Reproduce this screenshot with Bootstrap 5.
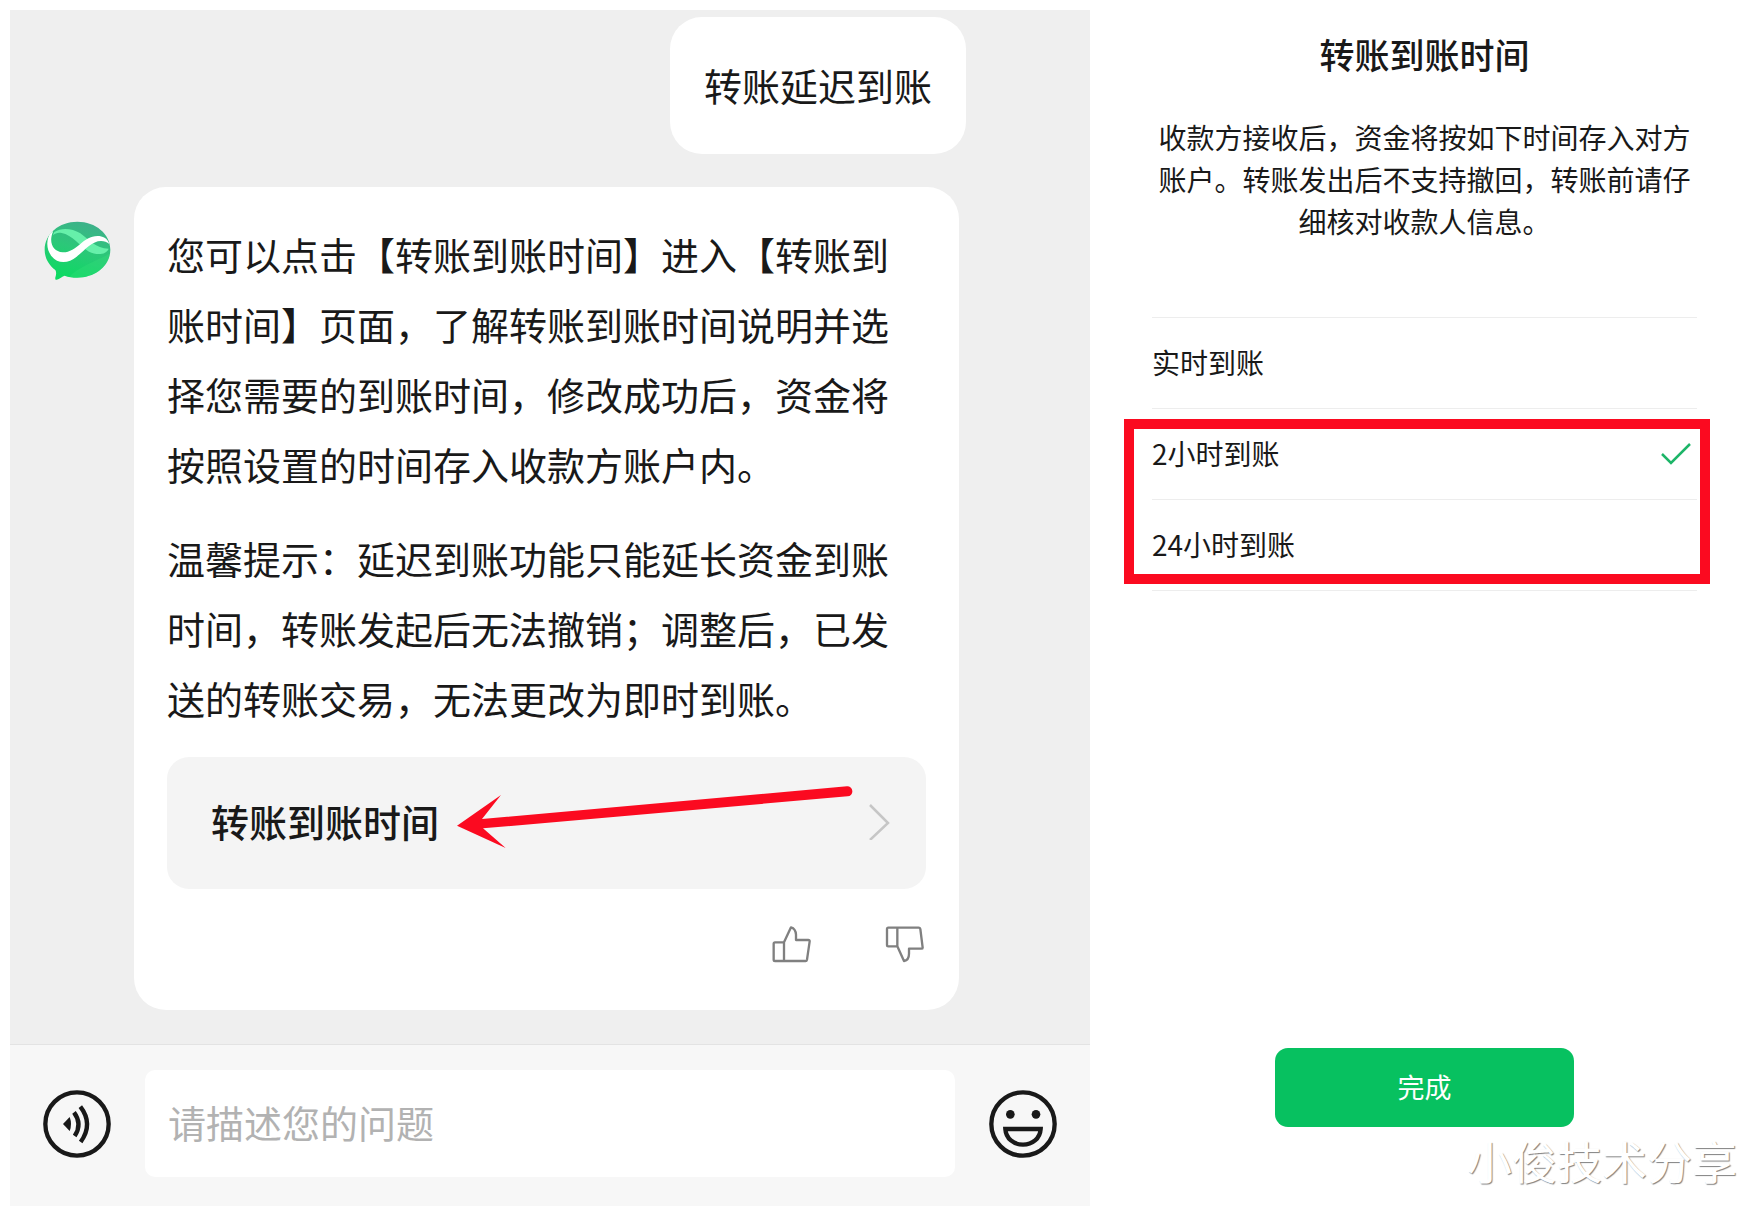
<!DOCTYPE html>
<html lang="zh-CN">
<head>
<meta charset="utf-8">
<meta name="viewport" content="width=device-width, initial-scale=1">
<title>转账到账时间</title>
<link href="https://cdn.jsdelivr.net/npm/bootstrap@5.3.0/dist/css/bootstrap.min.css" rel="stylesheet">
<style>
  body { font-family: "Noto Sans CJK SC", sans-serif; color: #191919; background: #fff; padding: 10px 0 0 10px; }
  .chat-pane { width: 61.75%; margin-bottom: 10px; background: #efefef; }
  .time-pane { width: 38.25%; padding: 18px 62px 89px; }
  .chat-log { padding: 7px 34px 34px; font-size: 38px; line-height: 70px; }
  .bubble { background: #fff; border-radius: 32px; }
  .bubble-me { padding: 33px 34px 34px; margin: 0 90px 33px 0; }
  .bubble-bot { flex: 1 1 0; min-width: 0; padding: 32px 33px 47px; margin-right: 97px; }
  .bubble-bot p { margin-bottom: 24px; }
  .avatar { margin: 34px 23px 0 0; }
  .link-row { padding: 29px 36px 33px 44px; border-radius: 22px; background: #f4f4f4; color: #191919; font-weight: 500; }
  .hint-arrow { left: 290px; top: 29px; pointer-events: none; }
  .votes { gap: 70px; margin-top: 37px; }
  .plain-btn { border: 0; padding: 0; background: none; display: block; line-height: 0; }
  svg { display: block; }
  .composer { gap: 34px; padding: 25px 33px 29px; background: #f7f7f7; border-top: 1px solid #e3e3e3; }
  .composer .form-control { height: 107px; border: 0; border-radius: 10px; padding: 0 23px 4px; font-size: 38px; }
  .composer .form-control::placeholder { color: #b2b2b2; opacity: 1; }
  .pane-title { font-size: 35px; line-height: 52px; font-weight: 500; margin-bottom: 36px; }
  .pane-desc { font-size: 28px; line-height: 42px; margin-bottom: 75px; }
  .options { font-size: 28px; border-top: 1px solid #ededed; }
  .option { height: 91px; border-bottom: 1px solid #ededed; padding: 0 5px 2px 0; cursor: pointer; }
  .option svg { visibility: hidden; }
  .btn-check:checked + .option svg { visibility: visible; }
  .red-frame { inset: 10px -13px 7px -28px; border: 10px solid #fb0a20; pointer-events: none; }
  .done-btn { width: 299px; height: 79px; border: 0; border-radius: 13px; background: #07c160; color: #fff; font-size: 27px; }
  .done-btn:hover { background: #06ad56; color: #fff; }
  .watermark { right: 22px; bottom: 23px; font-size: 45px; line-height: 64px; color: #fff; text-shadow: 1px 1px 1px #808080; }
</style>
<script src="https://cdn.jsdelivr.net/npm/bootstrap@5.3.0/dist/js/bootstrap.bundle.min.js"></script>
</head>
<body class="d-flex min-vh-100">
<main class="chat-pane d-flex flex-column">
  <div class="chat-log flex-grow-1">
    <div class="d-flex justify-content-end"><div class="bubble bubble-me">转账延迟到账</div></div>
    <div class="d-flex align-items-start">
      <svg class="avatar flex-shrink-0" width="67" height="60" viewBox="131 181 201 180" role="img" aria-label="客服">
        <defs>
          <linearGradient id="lg" x1="0.75" y1="0" x2="0.4" y2="1"><stop offset="0" stop-color="#3fae8c"/><stop offset=".5" stop-color="#2bc878"/><stop offset="1" stop-color="#0cda62"/></linearGradient>
          <clipPath id="oval"><ellipse cx="231" cy="267" rx="99" ry="84"/></clipPath>
        </defs>
        <path d="M231 183C286 183 330 220 330 267S286 351 231 351C216 351 204 349 193 345C186 347 178 355 169 357C164 358 164 353 166 347C168 340 168 333 165 328C145 313 133 292 133 267C133 220 176 183 231 183Z" fill="url(#lg)"/>
        <g clip-path="url(#oval)">
          <path d="M205 351C230 320 290 300 330 278V351Z" fill="#38e07a" opacity=".3"/>
          <path d="M162 214C184 200 215 203 240 218C266 236 285 264 325 264C318 282 290 285 266 273C240 258 215 222 184 217C174 215 165 217 157 224Z" fill="#66f0aa"/>
          <path d="M155 209C137 232 136 264 153 286C174 312 205 308 229 288C254 268 275 241 302 241C312 241 320 244 327 250C322 232 306 226 292 226C270 226 254 238 240 250C225 263 206 276 187 275C158 273 144 245 158 213Z" fill="#fff"/>
        </g>
      </svg>
      <div class="bubble bubble-bot">
        <p>您可以点击【转账到账时间】进入【转账到账时间】页面，了解转账到账时间说明并选择您需要的到账时间，修改成功后，资金将按照设置的时间存入收款方账户内。</p>
        <p>温馨提示：延迟到账功能只能延长资金到账时间，转账发起后无法撤销；调整后，已发送的转账交易，无法更改为即时到账。</p>
        <a href="#time" class="link-row position-relative d-flex align-items-center justify-content-between text-decoration-none">
          转账到账时间
          <svg width="22" height="38" viewBox="0 0 22 38" fill="none" stroke="#c6c6c6" stroke-width="2.5"><path d="M2 3L20 21L2 38"/></svg>
          <svg class="hint-arrow position-absolute" width="396" height="64" viewBox="80 138 1188 192" fill="#fb0a20"><path d="M80 257L212 165L155 237L1250 139A15 15 0 0 1 1252 169L158 265L226 324Z"/></svg>
        </a>
        <div class="votes d-flex justify-content-end">
          <button class="plain-btn" type="button" aria-label="赞"><svg width="42" height="37" viewBox="96 138 126 111" fill="none" stroke="#808080" stroke-width="7" stroke-linejoin="round"><path d="M132 187H105Q101 187 101 191V239Q101 243 105 243H197Q200 243 201 239L209 184Q209 180 205 180H168V164Q167 146 153 142L132 187V243"/></svg></button>
          <button class="plain-btn" type="button" aria-label="踩"><svg width="42" height="37" viewBox="432 138 126 111" fill="none" stroke="#808080" stroke-width="7" stroke-linejoin="round"><path d="M472 199H445Q441 199 441 195V147Q441 143 445 143H536Q540 143 541 147L548 203Q548 206 544 206H507V221Q507 240 492 243L472 199V143"/></svg></button>
        </div>
      </div>
    </div>
  </div>
  <form class="composer d-flex align-items-center">
    <button class="plain-btn" type="button" aria-label="语音输入"><svg width="68" height="68" viewBox="129 210 204 204" fill="none" stroke="#191919"><circle cx="231" cy="312" r="95" stroke-width="13"/><path d="M189 312L209 291Q217 312 209 333Z" fill="#191919" stroke="none"/><path d="M222 277Q248 312 224 348M241 260Q281 312 242 366" stroke-width="13"/></svg></button>
    <input class="form-control shadow-none" type="text" placeholder="请描述您的问题" aria-label="请描述您的问题">
    <button class="plain-btn" type="button" aria-label="表情"><svg width="68" height="68" viewBox="207 210 204 204" fill="none" stroke="#191919" stroke-width="13"><circle cx="309" cy="312" r="95"/><g fill="#191919" stroke="none"><circle cx="271" cy="283" r="13"/><circle cx="348" cy="283" r="13"/></g><path d="M256 327H362C360 356 337 374 309 374S258 356 256 327Z"/></svg></button>
  </form>
</main>
<section id="time" class="time-pane d-flex flex-column">
  <h1 class="pane-title text-center">转账到账时间</h1>
  <p class="pane-desc text-center">收款方接收后，资金将按如下时间存入对方账户。转账发出后不支持撤回，转账前请仔细核对收款人信息。</p>
  <div class="options">
    <input class="btn-check" type="radio" name="delay" id="d0">
    <label class="option d-flex align-items-center justify-content-between" for="d0">实时到账</label>
    <div class="position-relative">
      <input class="btn-check" type="radio" name="delay" id="d2" checked>
      <label class="option d-flex align-items-center justify-content-between" for="d2">2小时到账 <svg width="32" height="24" viewBox="0 0 32 24" fill="none" stroke="#1db568" stroke-width="2.5"><path d="M2 13L11 22L30 3"/></svg></label>
      <input class="btn-check" type="radio" name="delay" id="d24">
      <label class="option d-flex align-items-center justify-content-between" for="d24">24小时到账 <svg width="32" height="24" viewBox="0 0 32 24" fill="none" stroke="#1db568" stroke-width="2.5"><path d="M2 13L11 22L30 3"/></svg></label>
      <div class="red-frame position-absolute"></div>
    </div>
  </div>
  <button class="btn done-btn mt-auto mx-auto" type="button">完成</button>
</section>
<div class="watermark position-absolute">小俊技术分享</div>
</body>
</html>
